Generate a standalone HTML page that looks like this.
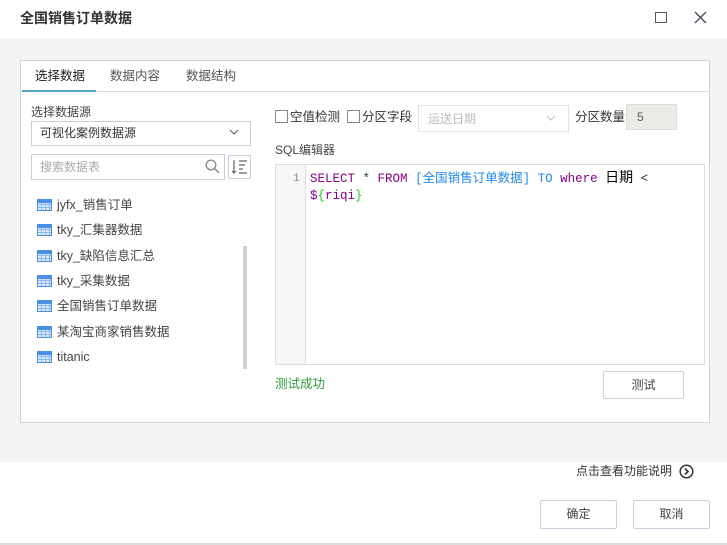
<!DOCTYPE html>
<html><head><meta charset="utf-8"><style>
*{margin:0;padding:0;box-sizing:border-box}
body{width:727px;height:545px;position:relative;font-family:"Liberation Sans","Noto Sans CJK SC",sans-serif;font-size:12px;color:#333;background:#fff;overflow:hidden}
.a{position:absolute;line-height:16px}
.cb{display:inline-block;width:13px;height:13px;border:1px solid #888;vertical-align:-2px;margin-right:2px;background:#fff}
.ico{position:absolute;left:37px;width:15px;height:12px;border:1px solid #4a90e2;background:
linear-gradient(#4a90e2,#4a90e2) 0 0/100% 3px no-repeat,
repeating-linear-gradient(90deg,transparent 0 3px,#8bb8ee 3px 4px),
repeating-linear-gradient(0deg,transparent 0 2px,#8bb8ee 2px 3px);background-color:#dbe9fb}
.it{position:absolute;left:57px;font-size:12.5px;color:#444;line-height:16px}
.btn{position:absolute;border:1px solid #ccd;background:#fff;text-align:center;color:#444;border-radius:2px}
code{font-family:"Liberation Mono","Noto Sans CJK SC",monospace}
</style></head><body>
<div class="a" style="left:20px;top:10px;font-size:14px;font-weight:bold;color:#333">全国销售订单数据</div>
<div class="a" style="left:655px;top:12px;width:12px;height:11px;border:1.5px solid #556"></div>
<svg class="a" style="left:694px;top:11px" width="13" height="13"><path d="M1 1L12 12M12 1L1 12" stroke="#556" stroke-width="1.5"/></svg>
<div class="a" style="left:0;top:38px;width:727px;height:424px;background:#f4f5f7"></div>
<div class="a" style="left:20px;top:60px;width:690px;height:363px;background:#fff;border:1px solid #d4d4d4"></div>
<div class="a" style="left:21px;top:91px;width:688px;height:1px;background:#cfe0e8"></div>
<div class="a" style="left:22px;top:90px;width:74px;height:2px;background:#5aa1d0"></div>
<div class="a" style="left:35px;top:68px;font-size:12.5px;color:#222">选择数据</div>
<div class="a" style="left:110px;top:68px;font-size:12.5px;color:#555">数据内容</div>
<div class="a" style="left:186px;top:68px;font-size:12.5px;color:#555">数据结构</div>
<div class="a" style="left:31px;top:104px;color:#444">选择数据源</div>
<div class="a" style="left:31px;top:121px;width:220px;height:25px;border:1px solid #ccd;padding:3px 8px;color:#333">可视化案例数据源</div>
<svg class="a" style="left:229px;top:129px" width="10" height="6"><path d="M1 1L5 5L9 1" stroke="#555" fill="none"/></svg>
<div class="a" style="left:31px;top:154px;width:194px;height:26px;border:1px solid #ccd;padding:4px 8px;color:#aaa">搜索数据表</div>
<svg class="a" style="left:205px;top:159px" width="15" height="15"><circle cx="6" cy="6" r="4.8" stroke="#888" fill="none" stroke-width="1.3"/><path d="M9.5 9.5L14 14" stroke="#888" stroke-width="1.5"/></svg>
<div class="a" style="left:228px;top:155px;width:23px;height:24px;border:1px solid #ccd"></div>
<svg class="a" style="left:231px;top:159px" width="18" height="16"><path d="M3 1V14M1 12L3 14L5 12M8 2H16M8 6H14M8 10H12M8 14H16" stroke="#666" fill="none" stroke-width="1.2"/></svg>
<div class="ico" style="top:199px"></div><div class="it" style="top:197px">jyfx_销售订单</div>
<div class="ico" style="top:224px"></div><div class="it" style="top:222px">tky_汇集器数据</div>
<div class="ico" style="top:250px"></div><div class="it" style="top:248px">tky_缺陷信息汇总</div>
<div class="ico" style="top:275px"></div><div class="it" style="top:273px">tky_采集数据</div>
<div class="ico" style="top:300px"></div><div class="it" style="top:298px">全国销售订单数据</div>
<div class="ico" style="top:326px"></div><div class="it" style="top:324px">某淘宝商家销售数据</div>
<div class="ico" style="top:351px"></div><div class="it" style="top:349px">titanic</div>
<div class="a" style="left:243px;top:246px;width:4px;height:123px;background:#d0d0d0"></div>
<div class="a" style="left:275px;top:109px;color:#333;font-size:12.5px"><span class="cb"></span>空值检测</div>
<div class="a" style="left:347px;top:109px;color:#333;font-size:12.5px"><span class="cb"></span>分区字段</div>
<div class="a" style="left:418px;top:105px;width:151px;height:27px;border:1px solid #e2e2e2;padding:5px 9px;color:#bbb">运送日期</div>
<svg class="a" style="left:546px;top:115px" width="10" height="6"><path d="M1 1L5 5L9 1" stroke="#bbb" fill="none"/></svg>
<div class="a" style="left:575px;top:109px;font-size:12.5px">分区数量</div>
<div class="a" style="left:626px;top:104px;width:51px;height:26px;background:#ececE6;border:1px solid #ddd;padding:4px 10px;color:#555">5</div>
<div class="a" style="left:275px;top:142px;color:#444">SQL编辑器</div>
<div class="a" style="left:275px;top:164px;width:430px;height:201px;border:1px solid #ddd"></div>
<div class="a" style="left:276px;top:165px;width:30px;height:199px;background:#f7f7f7;border-right:1px solid #ddd"></div>
<div class="a" style="left:293px;top:170px;font-size:11px;color:#888"><code>1</code></div>
<div class="a" style="left:310px;top:169px;font-size:12.5px;line-height:16px;white-space:nowrap"><code><span style="color:#808">SELECT</span> * <span style="color:#808">FROM</span> <span style="color:#28e">[全国销售订单数据] TO</span> <span style="color:#808">where</span> <span style="color:#000;font-family:'Noto Sans CJK SC';font-size:14px">日期</span> &lt;<br><span style="color:#808">$</span><span style="color:#2c2">{</span><span style="color:#808">riqi</span><span style="color:#2c2">}</span></code></div>
<div class="a" style="left:275px;top:376px;color:#2a9a3a;font-size:12.5px">测试成功</div>
<div class="btn" style="left:603px;top:371px;width:81px;height:28px;line-height:26px">测试</div>
<div class="a" style="left:576px;top:463px;color:#333">点击查看功能说明</div>
<svg class="a" style="left:679px;top:464px" width="15" height="15"><circle cx="7.5" cy="7.5" r="6.3" stroke="#333" fill="none" stroke-width="1.5"/><path d="M6 4.5L9 7.5L6 10.5" stroke="#333" fill="none" stroke-width="1.6"/></svg>
<div class="btn" style="left:540px;top:500px;width:77px;height:29px;line-height:27px">确定</div>
<div class="btn" style="left:633px;top:500px;width:77px;height:29px;line-height:27px">取消</div>
<div class="a" style="left:0;top:543px;width:727px;height:2px;background:#ddd"></div>
</body></html>
